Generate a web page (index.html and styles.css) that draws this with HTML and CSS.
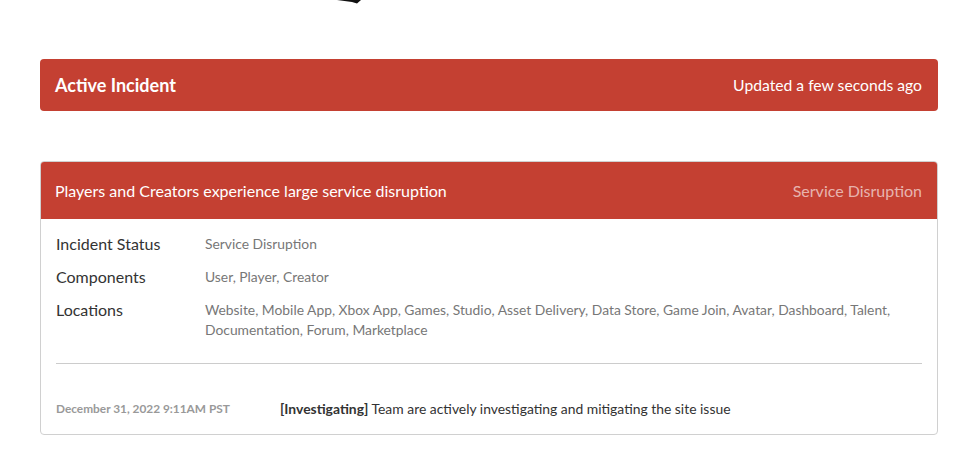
FILE: index.html
```html
<!DOCTYPE html>
<html lang="en">
<head>
    <meta charset="UTF-8">
    <meta name="viewport" content="width=device-width, initial-scale=1.0">
    <title>Status</title>
    <link rel="stylesheet" href="styles.css">
</head>
<body>
    <div class="top">
        <svg class="logo-tail" width="980" height="6" viewBox="0 0 980 6">
            <polygon points="337,0 361,0 357,3.5 352,2" fill="#111"/>
        </svg>
    </div>

    <div class="container">
        <!-- active incident banner -->
        <div class="banner">
            <h1>Active Incident</h1>
            <span>Updated a few seconds ago</span>
        </div>

        <!-- incident card -->
        <div class="incident">
            <div class="incident-header">
                <h2>Players and Creators experience large service disruption</h2>
                <span class="incident-impact">Service Disruption</span>
            </div>
            <div class="incident-body">
                <div class="info-row">
                    <div class="info-label">Incident Status</div>
                    <div class="info-value">Service Disruption</div>
                </div>
                <div class="info-row">
                    <div class="info-label">Components</div>
                    <div class="info-value">User, Player, Creator</div>
                </div>
                <div class="info-row">
                    <div class="info-label">Locations</div>
                    <div class="info-value">Website, Mobile App, Xbox App, Games, Studio, Asset Delivery, Data Store, Game Join, Avatar, Dashboard, Talent, Documentation, Forum, Marketplace</div>
                </div>

                <div class="divider"></div>

                <div class="update">
                    <div class="update-time">December 31, 2022 9:11AM PST</div>
                    <div class="update-text"><strong>[Investigating]</strong> Team are actively investigating and mitigating the site issue</div>
                </div>
            </div>
        </div>
    </div>
</body>
</html>
```

FILE: styles.css
```css
* {
    margin: 0;
    padding: 0;
    box-sizing: border-box;
}

body {
    font-family: Lato, 'Open Sans', sans-serif;
    background: #fff;
    color: #333;
}

.top {
    height: 59px;
}

.logo-tail {
    display: block;
}

.container {
    margin: 0 42px 0 40px;
}

.banner {
    display: flex;
    align-items: center;
    justify-content: space-between;
    height: 52px;
    padding: 0 16px 0 15px;
    background: #c44032;
    color: #fff;
    border-radius: 4px;
}

.banner h1 {
    font-size: 18px;
    font-weight: 700;
}

.banner span {
    font-size: 15.7px;
}

.incident {
    margin-top: 50px;
    border: 1px solid #d0d0d0;
    border-radius: 4px;
    overflow: hidden;
}

.incident-header {
    display: flex;
    align-items: center;
    justify-content: space-between;
    height: 58px;
    margin: -1px -1px 0;
    padding: 0 16px 0 15px;
    background: #c44032;
    color: #fff;
}

.incident-header h2 {
    font-size: 16px;
    font-weight: 400;
}

.incident-impact {
    font-size: 16px;
    color: rgba(255, 255, 255, 0.62);
}

.incident-body {
    padding: 15px 15px 15px;
}

.info-row {
    display: grid;
    grid-template-columns: 149px 1fr;
    margin-bottom: 13px;
    line-height: 20px;
}

.info-label {
    font-size: 16px;
    color: #333;
}

.info-value {
    font-size: 13.85px;
    color: #777;
}

.divider {
    margin-top: 23px;
    border-top: 1px solid #ccc;
}

.update {
    display: grid;
    grid-template-columns: 224px 1fr;
    align-items: center;
    margin-top: 35px;
    line-height: 20px;
}

.update-time {
    font-size: 11.85px;
    font-weight: 700;
    color: #999;
}

.update-text {
    font-size: 13.9px;
    color: #333;
}
```
